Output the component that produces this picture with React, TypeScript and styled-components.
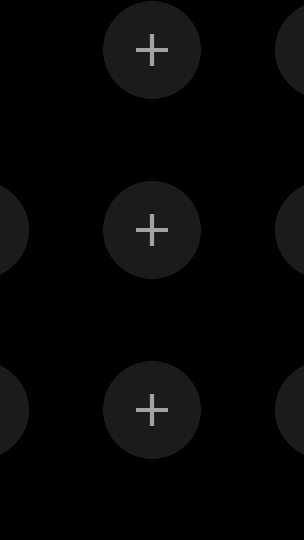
import React from "react";
import styled, { createGlobalStyle } from "styled-components";

const Global = createGlobalStyle`
  html, body {
    margin: 0;
    padding: 0;
    background: #000;
    overflow: hidden;
    font-family: "Liberation Sans", Arial, sans-serif;
  }
`;

const Screen = styled.div`
  width: 304px;
  height: 540px;
  overflow: hidden;
  background: #000;
`;

const Grid = styled.div`
  display: grid;
  grid-template-columns: repeat(3, 98px);
  grid-auto-rows: 98px;
  column-gap: 74px;
  row-gap: 82px;
  padding-top: 1px;
  margin-left: -69px;
`;

const AddButton = styled.button<{ $hidden?: boolean }>`
  width: 98px;
  height: 98px;
  border-radius: 50%;
  border: 1px solid #212121;
  background: #1b1b1b;
  padding: 0;
  display: flex;
  align-items: center;
  justify-content: center;
  cursor: pointer;
  visibility: ${(p) => (p.$hidden ? "hidden" : "visible")};
`;

const PlusIcon = () => (
  <svg width="34" height="34" viewBox="0 0 34 34" aria-hidden="true">
    <path d="M1 17h32M17 1v32" stroke="#a2a2a2" strokeWidth="4.2" fill="none" />
  </svg>
);

const slots = [false, true, true, true, true, true, true, true, true];

export default function App() {
  return (
    <>
      <Global />
      <Screen>
        <Grid>
          {slots.map((visible, i) => (
            <AddButton key={i} $hidden={!visible} aria-label="Add">
              <PlusIcon />
            </AddButton>
          ))}
        </Grid>
      </Screen>
    </>
  );
}
